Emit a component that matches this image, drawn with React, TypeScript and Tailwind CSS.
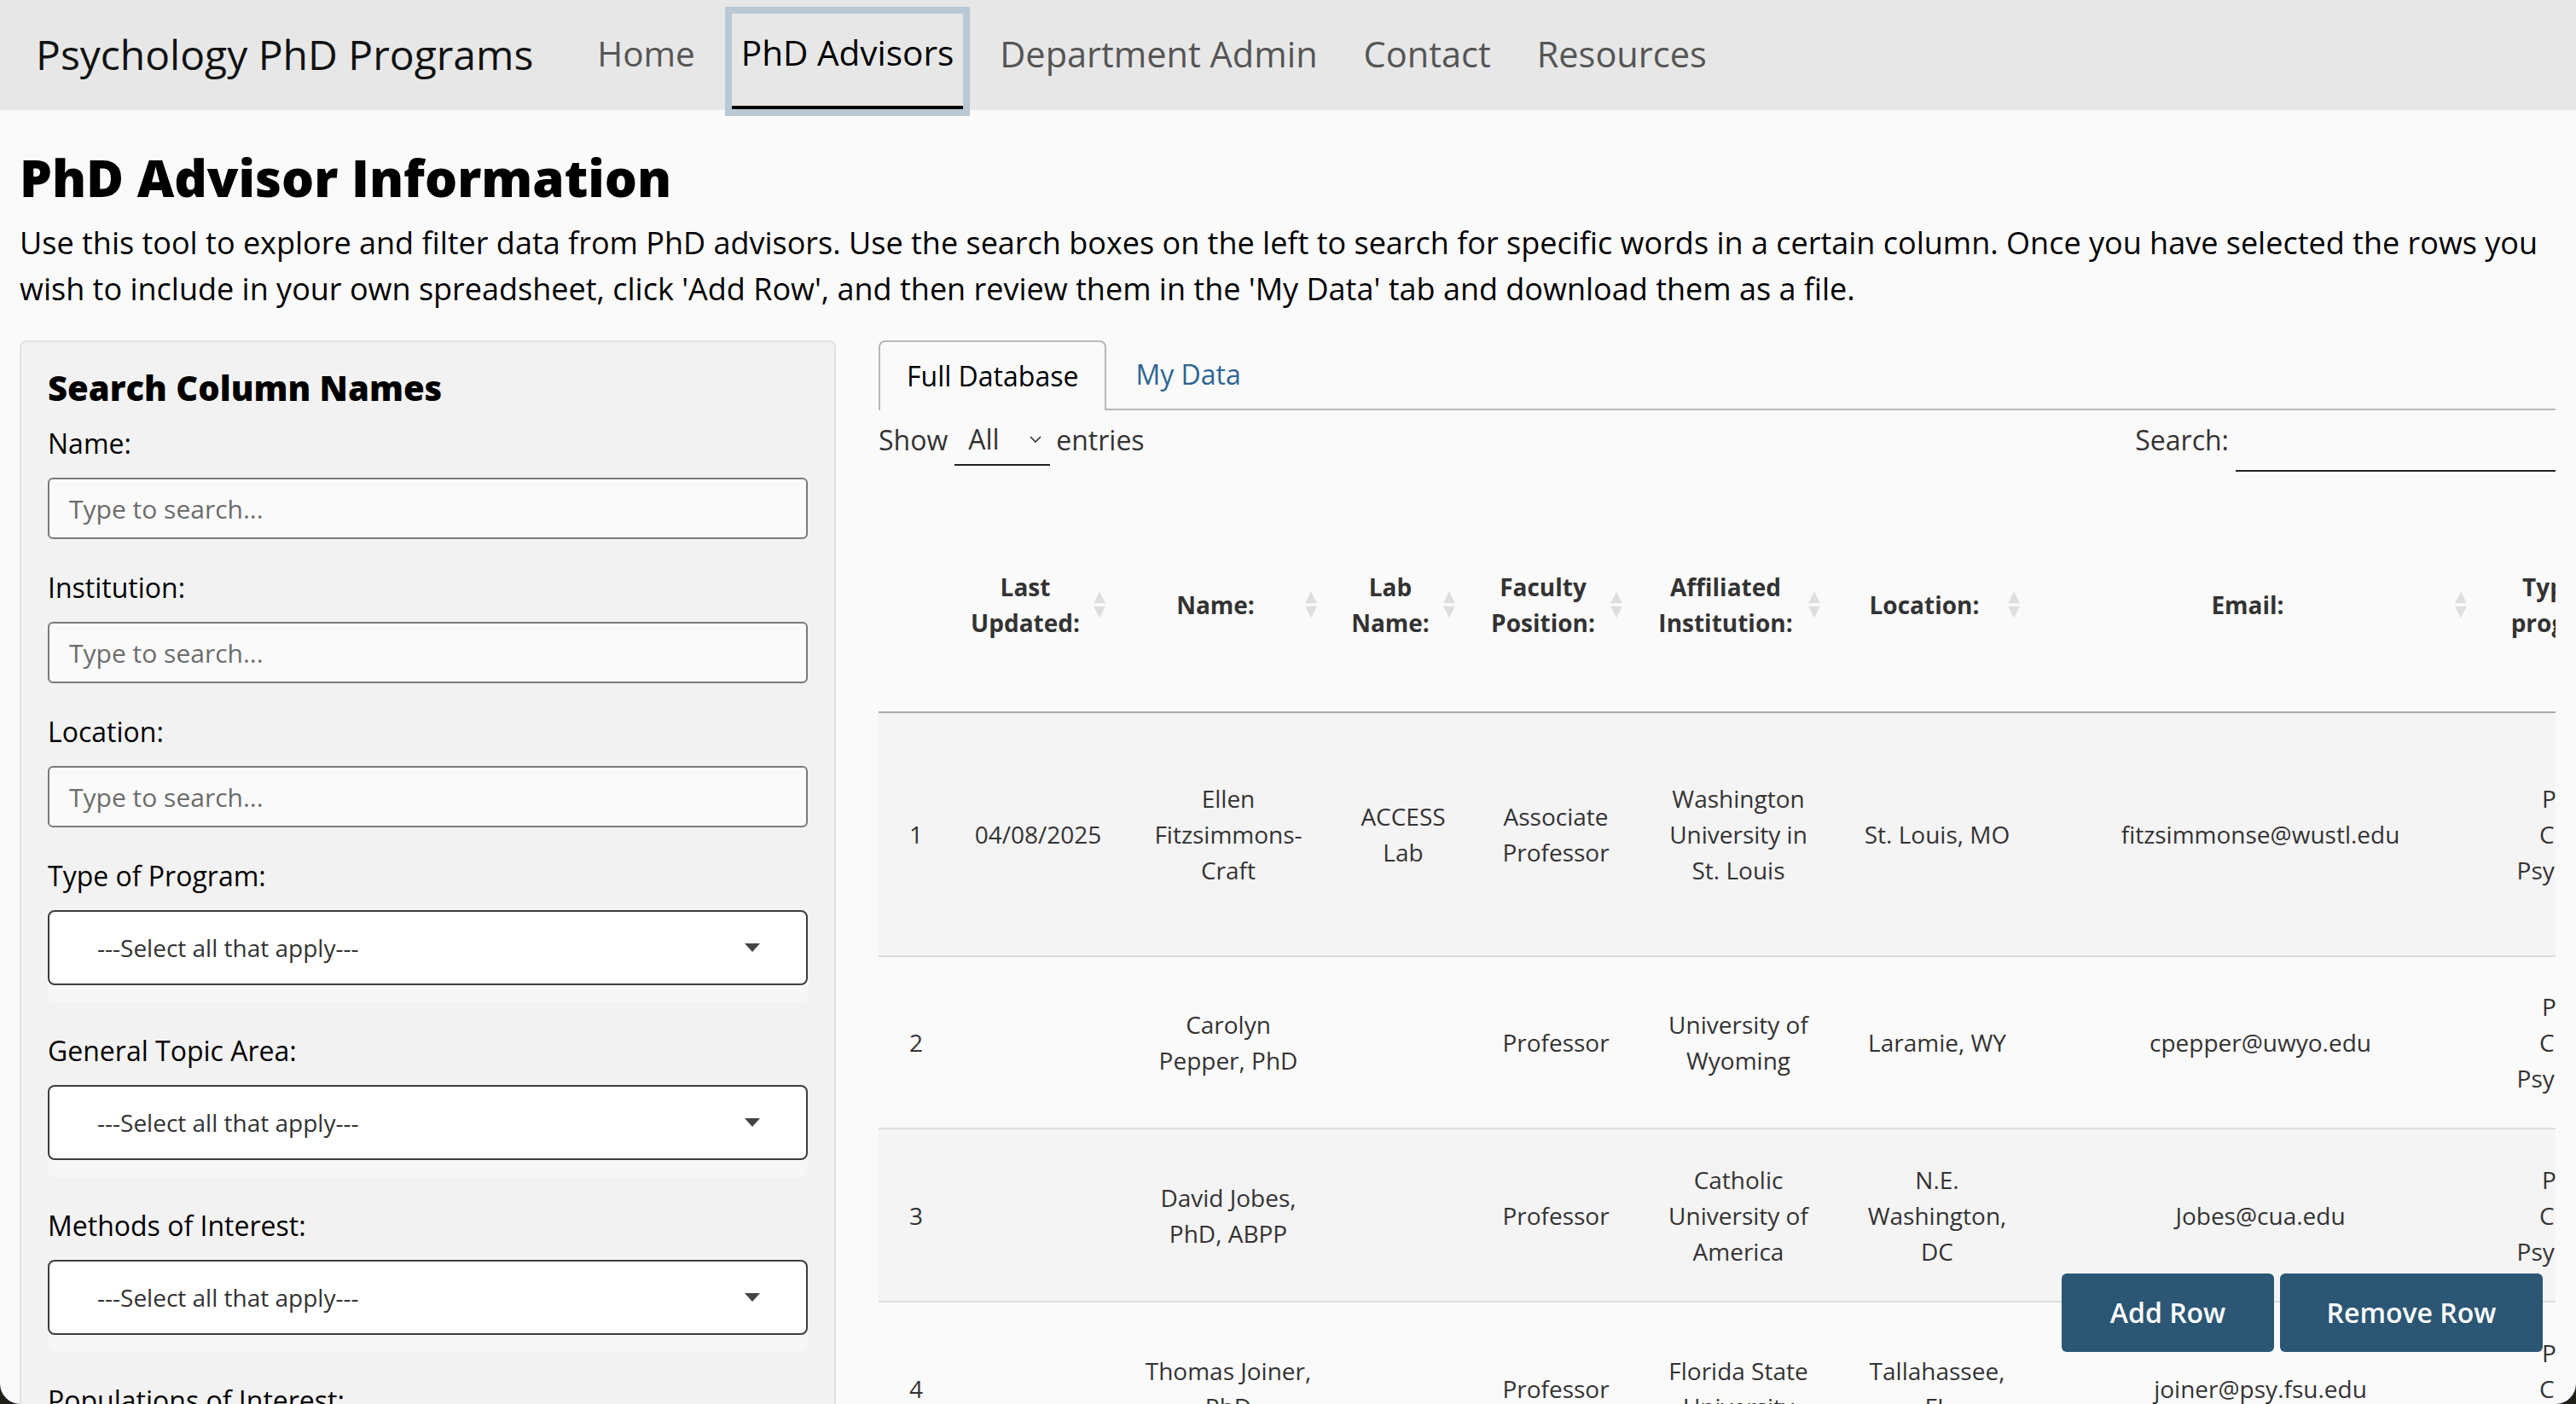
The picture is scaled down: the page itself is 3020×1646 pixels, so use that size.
import React from "react";

const SortArrows = () => (
  <span className="absolute right-[20px] top-1/2 -translate-y-1/2 flex flex-col items-center gap-[3px]">
    <svg width="14" height="14" viewBox="0 0 14 14"><path d="M7 0 L14 14 L0 14 Z" fill="#dedede" /></svg>
    <svg width="14" height="14" viewBox="0 0 14 14"><path d="M0 0 L14 0 L7 14 Z" fill="#dedede" /></svg>
  </span>
);

const Lines = ({ t }: { t: string }) => (
  <>
    {t.split("|").map((s, i) => (
      <React.Fragment key={i}>
        {i > 0 && <br />}
        {s}
      </React.Fragment>
    ))}
  </>
);

const Caret = () => (
  <svg width="18" height="10" viewBox="0 0 18 10"><path d="M0 0 L18 0 L9 10 Z" fill="#444" /></svg>
);

const InputField = ({ label }: { label: string }) => (
  <div className="mt-[33px]">
    <div className="text-[32px] leading-[48px] text-black mb-[16px]">{label}</div>
    <input
      placeholder="Type to search..."
      className="w-full h-[72px] border-2 border-[#7a7a7a] rounded-[6px] bg-[#fbfafb] px-[23px] text-[30px] placeholder:text-[#6c6c6c] outline-none"
    />
  </div>
);

const SelectField = ({ label }: { label: string }) => (
  <div className="mt-[33px]">
    <div className="text-[32px] leading-[48px] text-black mb-[16px]">{label}</div>
    <div className="bg-[#f8f7f8] rounded-[8px] pb-[20px]">
      <div className="h-[88px] bg-white border-2 border-[#3d3d3d] rounded-[8px] flex items-center justify-between pl-[56px] pr-[54px]">
        <span className="text-[28px] text-[#333]">---Select all that apply---</span>
        <Caret />
      </div>
    </div>
  </div>
);

const cols = [88, 198, 248, 162, 196, 232, 234, 524, 222];
const headers = ["", "Last|Updated:", "Name:", "Lab|Name:", "Faculty|Position:", "Affiliated|Institution:", "Location:", "Email:", "Type of|program:"];

const rows: { h: number; cells: string[] }[] = [
  { h: 286, cells: ["1", "04/08/2025", "Ellen|Fitzsimmons-|Craft", "ACCESS|Lab", "Associate|Professor", "Washington|University in|St. Louis", "St. Louis, MO", "fitzsimmonse@wustl.edu", "PhD in|Clinical|Psychology"] },
  { h: 202, cells: ["2", "", "Carolyn|Pepper, PhD", "", "Professor", "University of|Wyoming", "Laramie, WY", "cpepper@uwyo.edu", "PhD in|Clinical|Psychology"] },
  { h: 203, cells: ["3", "", "David Jobes,|PhD, ABPP", "", "Professor", "Catholic|University of|America", "N.E.|Washington,|DC", "Jobes@cua.edu", "PhD in|Clinical|Psychology"] },
  { h: 202, cells: ["4", "", "Thomas Joiner,|PhD", "", "Professor", "Florida State|University", "Tallahassee,|FL", "joiner@psy.fsu.edu", "PhD in|Clinical|Psychology"] },
];

export default function App() {
  return (
    <div className="h-[1646px] w-[3020px] bg-[#1f1f18] overflow-hidden font-['Open_Sans',sans-serif]">
      <div className="relative h-full w-full bg-[#fbfafb] rounded-b-[24px] overflow-hidden">
        {/* Navbar */}
        <nav className="relative z-10 h-[129px] bg-[#e7e7e7] flex items-center pl-[42px]">
          <span className="text-[48px] text-[#111] mr-[48px] leading-none -mt-[2px]">Psychology PhD Programs</span>
          <a className="h-full flex items-center px-[27px] text-[40.5px] text-[#555] -mt-[2px]">Home</a>
          <a className="relative h-full flex items-center px-[27px] text-[40.5px] text-black">
            <span className="-mt-[4px]">PhD Advisors</span>
            <span className="absolute left-[8px] right-[8px] top-[8px] bottom-[-7px] border-[8px] border-[#b9c8d3]"></span>
            <span className="absolute left-[16px] right-[16px] bottom-[1px] h-[4px] bg-black"></span>
          </a>
          <a className="h-full flex items-center px-[27px] text-[41.5px] text-[#555] -mt-[2px]">Department Admin</a>
          <a className="h-full flex items-center px-[27px] text-[41.5px] text-[#555] -mt-[2px]">Contact</a>
          <a className="h-full flex items-center px-[27px] text-[41.5px] text-[#555] -mt-[2px]">Resources</a>
        </nav>

        <div className="pl-[23px] pr-[24px]">
          <h1 className="mt-[43px] text-[60px] leading-[72px] font-extrabold text-black">PhD Advisor Information</h1>
          <p className="mt-[14px] text-[36px] leading-[54px] text-black">
            Use this tool to explore and filter data from PhD advisors. Use the search boxes on the left to search for specific words in a certain column. Once you have selected the rows you wish to include in your own spreadsheet, click 'Add Row', and then review them in the 'My Data' tab and download them as a file.
          </p>

          <div className="mt-[33px] flex gap-[50px] items-start">
            {/* Sidebar */}
            <div className="w-[957px] shrink-0 h-[1400px] bg-[#f3f2f3] border-2 border-[#e3e3e3] rounded-[8px] px-[31px] pt-[30px]">
              <h3 className="text-[40px] leading-[48px] font-extrabold text-black">Search Column Names</h3>
              <div className="-mt-[16px]">
                <InputField label="Name:" />
              </div>
              <InputField label="Institution:" />
              <InputField label="Location:" />
              <SelectField label="Type of Program:" />
              <SelectField label="General Topic Area:" />
              <SelectField label="Methods of Interest:" />
              <div className="mt-[33px] text-[32px] leading-[48px] text-black">Populations of Interest:</div>
            </div>

            {/* Main */}
            <div className="flex-1 min-w-0 overflow-hidden">
              <div className="flex border-b-2 border-[#b8b8b8] h-[82px]">
                <div className="h-[82px] -mb-[2px] px-[31px] flex items-center border-2 border-b-0 border-[#b8b8b8] rounded-t-[8px] bg-[#fbfafb] text-[32px] text-black">
                  Full Database
                </div>
                <div className="h-[80px] px-[34px] flex items-center text-[32px] text-[#2f6493]">My Data</div>
              </div>

              <div className="h-[72px] flex items-center justify-between text-[32px] text-[#333]">
                <div className="flex items-center -mt-[2px]">
                  <span>Show</span>
                  <div className="ml-[8px] w-[112px] h-[60px] border-b-2 border-[#222] flex items-center justify-between pl-[16px] pr-[10px]">
                    <span>All</span>
                    <svg width="14" height="9" viewBox="0 0 14 9"><path d="M1 1 L7 7 L13 1" stroke="#333" strokeWidth="1.6" fill="none" /></svg>
                  </div>
                  <span className="ml-[7px]">entries</span>
                </div>
                <div className="flex items-center">
                  <span className="-mt-[2px]">Search:</span>
                  <div className="ml-[8px] w-[375px] h-[70px] mt-[2px] border-b-2 border-[#222]"></div>
                </div>
              </div>

              <table className="mt-[31px] table-fixed border-collapse w-[2104px] text-[#333]">
                <colgroup>
                  {cols.map((w, i) => (
                    <col key={i} style={{ width: w }} />
                  ))}
                </colgroup>
                <thead>
                  <tr className="h-[251px] border-b-2 border-[#aaaaaa]">
                    {headers.map((h, i) => (
                      <th key={i} className="relative pl-[20px] pr-[50px] text-center align-middle text-[28px] leading-[42px] font-bold">
                        <Lines t={h} />
                        {i > 0 && i < 8 && <SortArrows />}
                      </th>
                    ))}
                  </tr>
                </thead>
                <tbody>
                  {rows.map((r, ri) => (
                    <tr
                      key={ri}
                      style={{ height: r.h }}
                      className={`${ri > 0 ? "border-t-2 border-[#dcdcdc]" : ""} ${ri % 2 === 0 ? "bg-[#f5f4f5]" : "bg-[#fbfafb]"}`}
                    >
                      {r.cells.map((c, ci) => (
                        <td key={ci} className="px-[20px] text-center align-middle text-[28px] leading-[42px] whitespace-nowrap">
                          <Lines t={c} />
                        </td>
                      ))}
                    </tr>
                  ))}
                </tbody>
              </table>
            </div>
          </div>
        </div>

        {/* Floating buttons */}
        <div className="absolute right-[39px] bottom-[61px] flex gap-[7px]">
          <button className="w-[249px] h-[92px] bg-[#2b5774] rounded-[6px] text-white text-[32px] font-semibold">Add Row</button>
          <button className="w-[308px] h-[92px] bg-[#2b5774] rounded-[6px] text-white text-[32px] font-semibold">Remove Row</button>
        </div>
      </div>
    </div>
  );
}
